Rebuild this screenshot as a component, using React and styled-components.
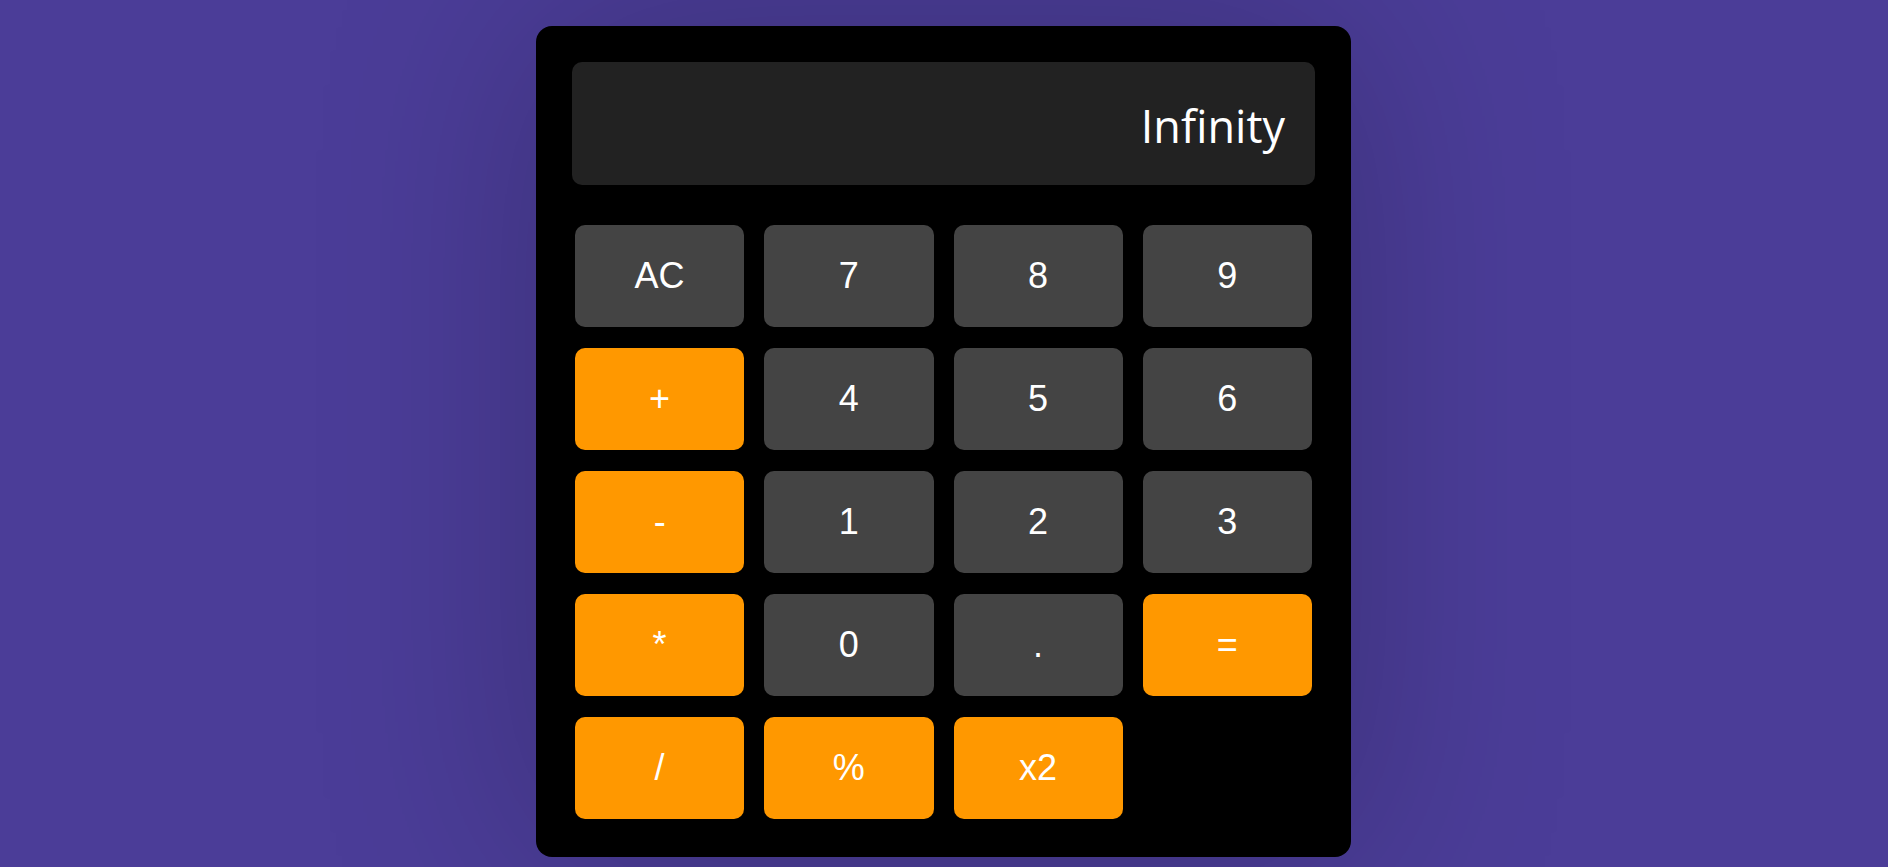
import React from "react";
import styled, { createGlobalStyle } from "styled-components";

const Global = createGlobalStyle`
  html, body { margin: 0; padding: 0; }
  body {
    background: #4b3d98;
    min-height: 867px;
    font-family: "Liberation Sans", Arial, sans-serif;
    overflow: hidden;
  }
`;

const Page = styled.div`
  display: flex;
  justify-content: center;
  padding-top: 26px;
  padding-right: 1px;
`;

const Card = styled.div`
  width: 815px;
  box-sizing: border-box;
  background: #000;
  border-radius: 16px;
  padding: 36px;
  box-shadow: 0 0 220px rgba(0, 0, 0, 0.22);
  display: flex;
  flex-direction: column;
  gap: 37px;
`;

const Display = styled.div`
  height: 123px;
  background: #222;
  border-radius: 10px;
  display: flex;
  align-items: center;
  justify-content: flex-end;
  padding: 4px 30px 0;
  box-sizing: border-box;
  color: #fff;
  font-family: "Open Sans", "Noto Sans", sans-serif;
  font-size: 45px;
`;

const Keys = styled.div`
  display: grid;
  grid-template-columns: repeat(4, 1fr);
  grid-auto-rows: 102px;
  column-gap: 20px;
  row-gap: 21px;
  padding: 3px 3px 2px;
`;

const Key = styled.button`
  border: none;
  border-radius: 10px;
  background: ${(p) => (p.$op ? "#ff9800" : "#444")};
  color: #fff;
  font-family: "Liberation Sans", Arial, sans-serif;
  font-size: 36px;
  display: flex;
  align-items: center;
  justify-content: center;
  padding: 0;
  cursor: pointer;
`;

const keys = [
  ["AC", false], ["7", false], ["8", false], ["9", false],
  ["+", true], ["4", false], ["5", false], ["6", false],
  ["-", true], ["1", false], ["2", false], ["3", false],
  ["*", true], ["0", false], [".", false], ["=", true],
  ["/", true], ["%", true], ["x2", true],
];

export default function App() {
  return (
    <>
      <Global />
      <Page>
        <Card>
          <Display>Infinity</Display>
          <Keys>
            {keys.map(([k, op]) => (
              <Key key={k} $op={op}>{k}</Key>
            ))}
          </Keys>
        </Card>
      </Page>
    </>
  );
}
